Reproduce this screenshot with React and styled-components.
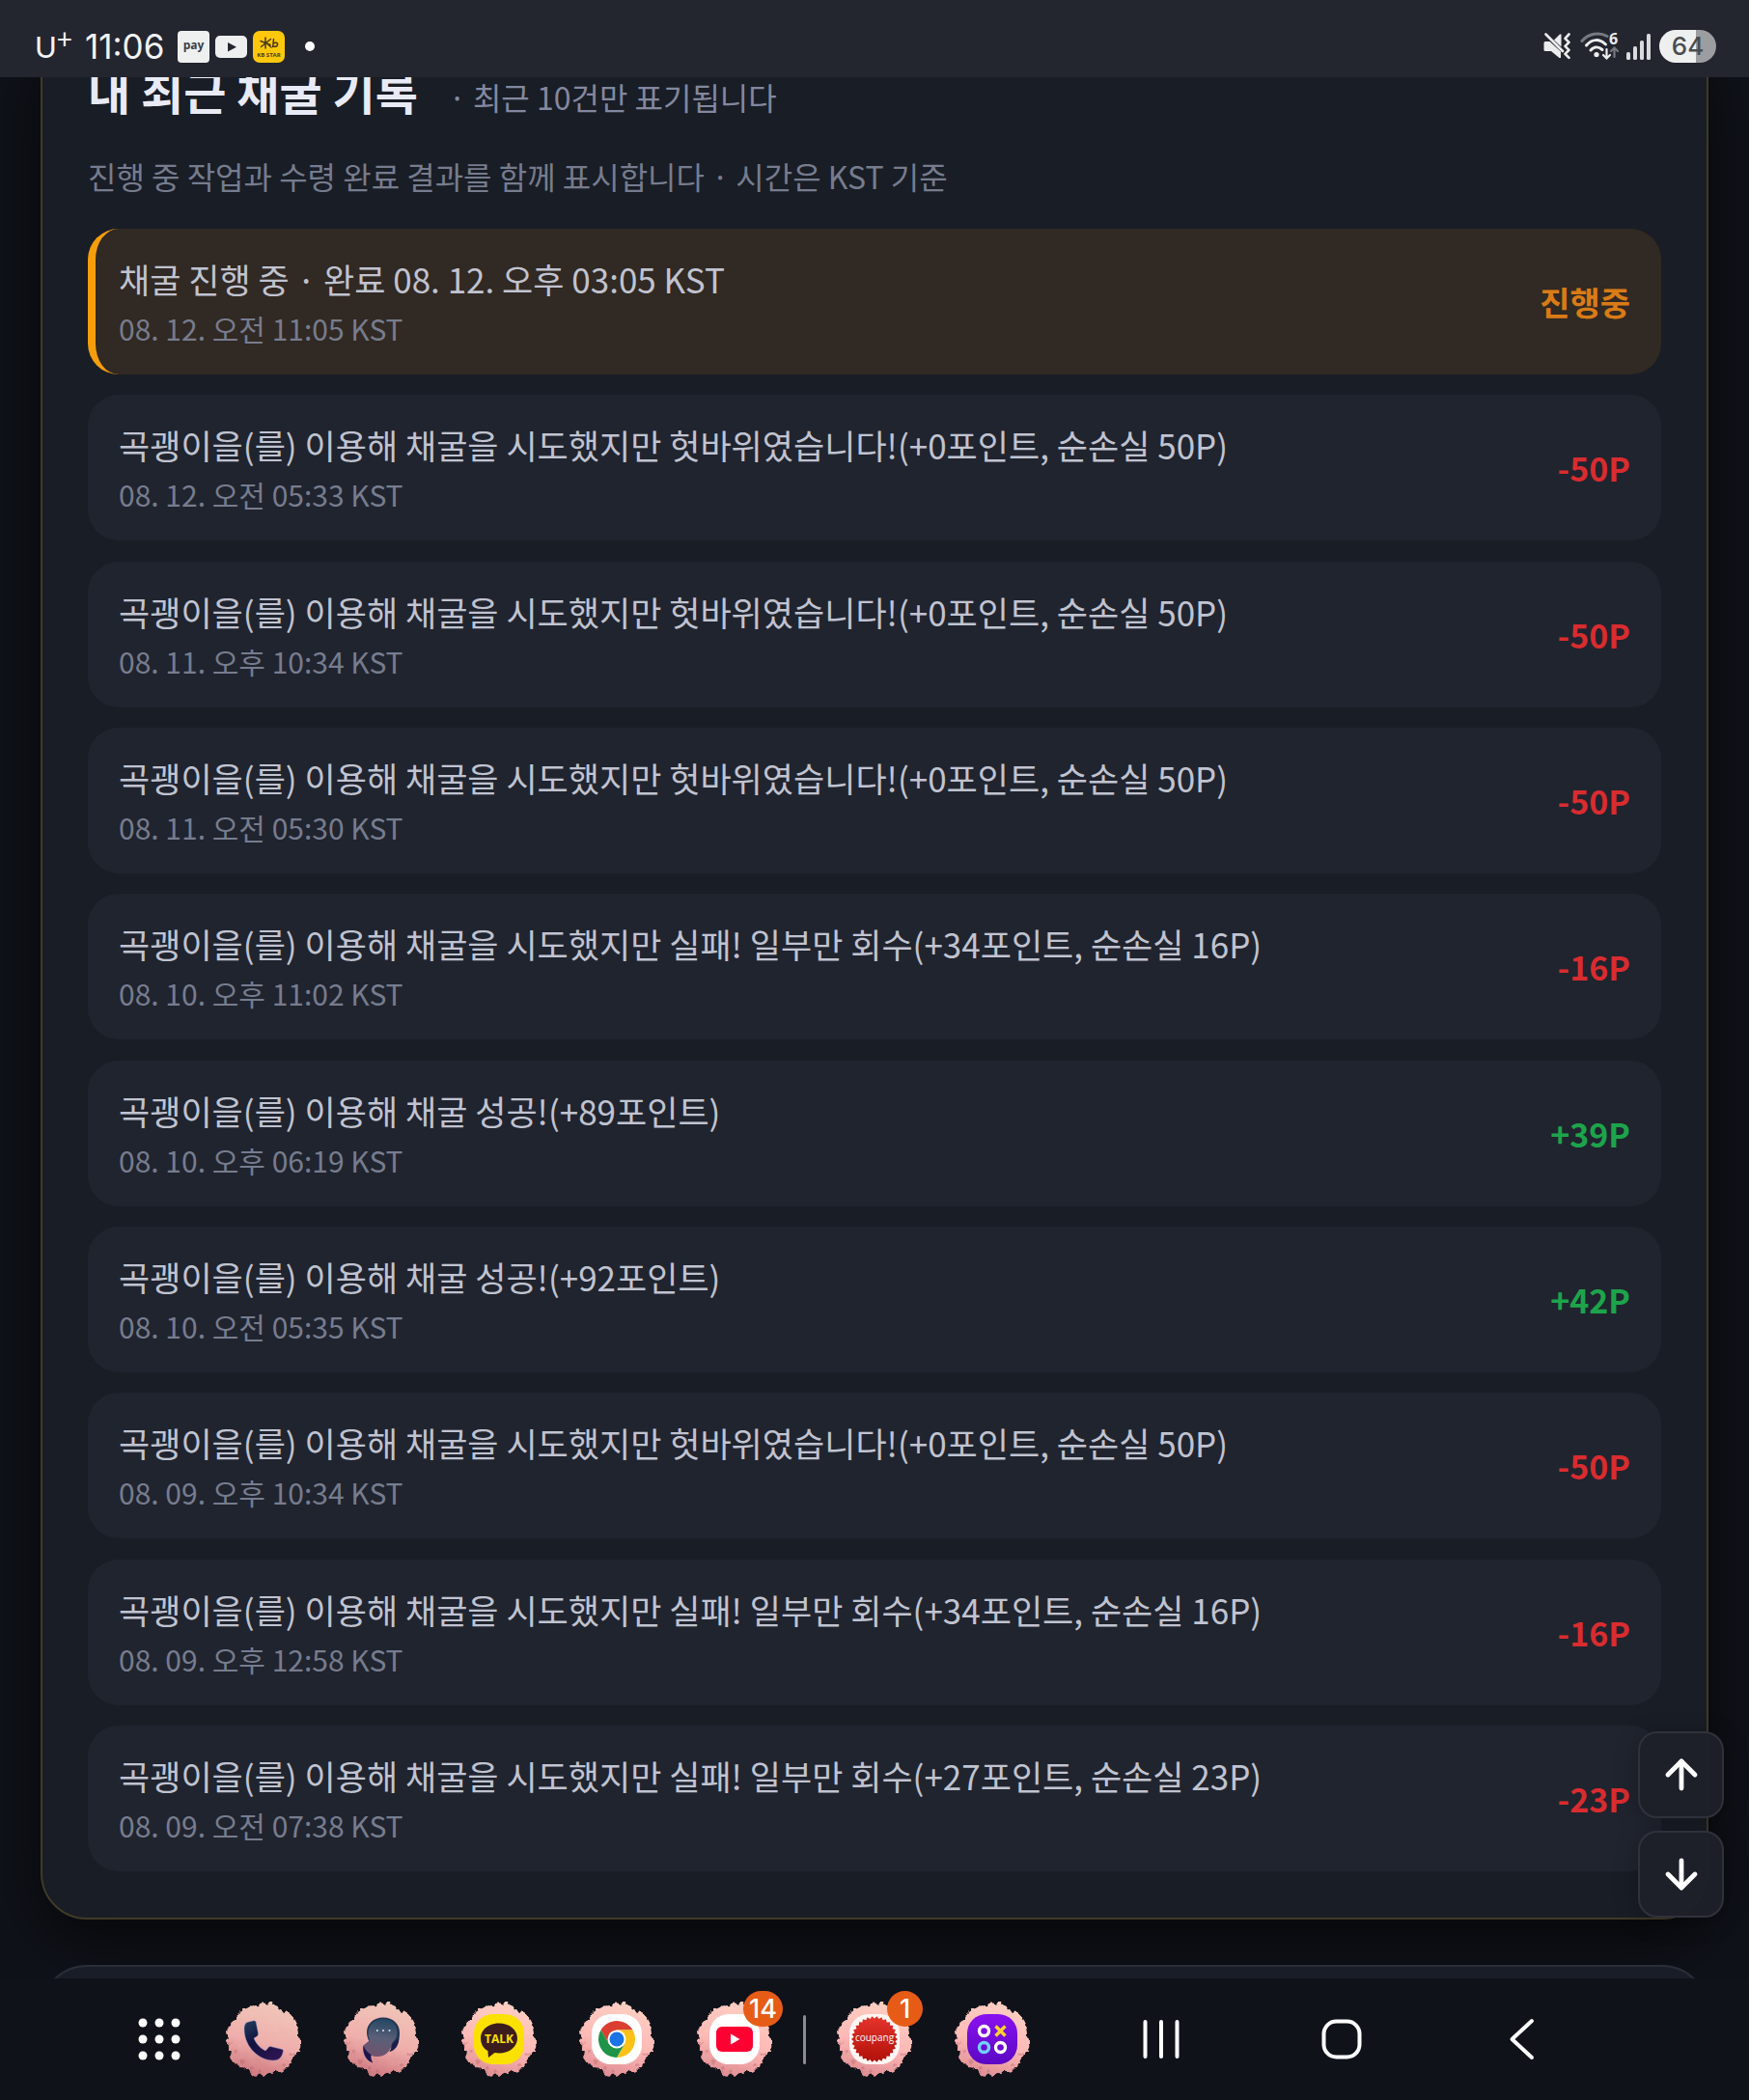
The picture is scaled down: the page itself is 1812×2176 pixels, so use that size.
import React, { useId } from "react";
import styled, { createGlobalStyle } from "styled-components";
import { ArrowDown, ArrowUp } from "lucide-react";

const GlobalStyle = createGlobalStyle`
  * { box-sizing: border-box; }
  body {
    margin: 0;
    background: #0f1219;
    color: #c0c3d0;
    font-family: "Noto Sans CJK KR", "Noto Sans", sans-serif;
  }
  button { font: inherit; color: inherit; }
`;

const Screen = styled.div`
  display: flex;
  flex-direction: column;
  min-height: 100vh;
`;

/* ---------- status bar ---------- */

const StatusBar = styled.header`
  position: relative;
  z-index: 2;
  display: flex;
  justify-content: space-between;
  align-items: center;
  height: 80px;
  padding: 16px 34px 0 36px;
  background: #23262f;
  color: #f2f3f5;
`;

const StatusGroup = styled.div`
  display: flex;
  align-items: center;
  gap: ${(p) => p.$gap}px;
`;

const Carrier = styled.span`
  display: flex;
  width: 40px;
  font: 400 31px/36px Lato, sans-serif;
`;

const CarrierPlus = styled.span`
  font: 400 28px/20px Lato, sans-serif;
`;

const Clock = styled.time`
  width: 84px;
  margin: 0 6px;
  font: 400 35px/36px Inter, sans-serif;
`;

const Battery = styled.span`
  width: 59px;
  height: 34px;
  border-radius: 17px;
  background: linear-gradient(90deg, #eef0f0 64%, #9c9da1 64%);
  color: #4a4c50;
  font: 500 26px/34px Inter, sans-serif;
  text-align: center;
`;

const MoreDot = styled.span`
  width: 10px;
  height: 10px;
  margin-left: 15px;
  border-radius: 50%;
  background: #fff;
`;

/* ---------- page ---------- */

const Content = styled.main`
  flex: 1;
  display: flex;
  flex-direction: column;
  gap: 47px;
  padding: 0 42px;
  overflow: hidden;
`;

const Card = styled.section`
  flex: 1;
  display: flex;
  flex-direction: column;
  margin-top: -49px;
  padding: 32px 47px 48px;
  border: 2px solid #423a28;
  border-radius: 48px;
  background: #191d25;
  box-shadow: 0 22px 64px rgba(0, 0, 0, 0.6);
`;

const NextCard = styled.section`
  height: 96px;
  margin-bottom: -82px;
  border: 2px solid #2b2e38;
  border-radius: 48px;
  background: #191d27;
`;

const CardHeader = styled.div`
  display: flex;
  align-items: baseline;
  gap: 32px;
`;

const Heading = styled.h2`
  margin: 0;
  color: #e8eaf6;
  font-size: 48px;
  line-height: 56px;
  font-weight: 700;
`;

const HeadingNote = styled.span`
  color: #8388a0;
  font-size: 32px;
  line-height: 48px;
`;

const Description = styled.p`
  margin: 34px 0 31px;
  color: #767c8e;
  font-size: 32px;
  line-height: 48px;
`;

const List = styled.ul`
  flex: 1;
  display: flex;
  flex-direction: column;
  justify-content: space-between;
  gap: 21px;
  margin: 0;
  padding: 0;
  list-style: none;
`;

const Entry = styled.li`
  display: flex;
  justify-content: space-between;
  align-items: center;
  padding: 24px 32px;
  border-radius: 32px;
  background: ${(p) => (p.$active ? "#312923" : "#20242f")};
  ${(p) => p.$active && "border-left: 8px solid #f59e0b; padding-left: 24px;"}
`;

const EntryTitle = styled.p`
  margin: 0;
  color: #c0c3d0;
  font-size: 35px;
  line-height: 56px;
`;

const EntryDate = styled.time`
  display: block;
  color: #777c8e;
  font-size: 30px;
  line-height: 47px;
`;

const amountColors = { active: "#d97b16", loss: "#d92c2f", gain: "#1da44b" };

const Amount = styled.strong`
  color: ${(p) => amountColors[p.$kind]};
  font-size: 34px;
  line-height: 51px;
  font-weight: 700;
`;

const ScrollControls = styled.div`
  position: fixed;
  right: 26px;
  bottom: 189px;
  z-index: 3;
  display: flex;
  flex-direction: column;
  gap: 13px;
`;

const ScrollButton = styled.button`
  display: grid;
  place-items: center;
  width: 89px;
  height: 90px;
  padding: 0;
  border: 2px solid #30323b;
  border-radius: 20px;
  background: rgba(29, 32, 41, 0.96);
  color: #fff;
  box-shadow: 0 4px 24px rgba(0, 0, 0, 0.25);
`;

/* ---------- system bar ---------- */

const TaskBar = styled.nav`
  position: relative;
  z-index: 2;
  display: flex;
  align-items: center;
  height: 126px;
  padding-left: 143px;
  background: #0f1219;
`;

const AppGroup = styled.div`
  display: flex;
  gap: 44px;
`;

const IconButton = styled.button`
  position: relative;
  display: grid;
  place-items: center;
  width: ${(p) => p.$width}px;
  height: 78px;
  padding: 0;
  border: 0;
  background: none;
  color: #fff;
`;

const AppsSlot = styled.div`
  margin-right: 47px;
`;

const Divider = styled.span`
  width: 3px;
  height: 51px;
  margin: 0 32px;
  border-radius: 2px;
  background: #8b8c90;
`;

const SystemKeys = styled.div`
  display: flex;
  gap: 127px;
  margin-left: 106px;
`;

const Badge = styled.span`
  position: absolute;
  top: -11px;
  right: -11px;
  min-width: 37px;
  height: 37px;
  padding: 0 6px;
  border-radius: 19px;
  background: #e65c17;
  color: #fff;
  font: 500 27px/37px Inter, sans-serif;
  text-align: center;
`;

/* ---------- icons ---------- */

const PayIcon = () => (
  <svg width="33" height="33" viewBox="0 0 33 33">
    <rect width="33" height="33" rx="4" fill="#eef0f0" />
    <text x="16.5" y="19" textAnchor="middle" fontFamily="Open Sans, sans-serif" fontWeight="700" fontSize="12" fill="#3c3e45">pay</text>
  </svg>
);

const VideoIcon = () => (
  <svg width="33" height="23" viewBox="0 0 33 23">
    <rect width="33" height="23" rx="5" fill="#eef0f0" />
    <path d="M13 7l9 4.700l-9 4.700z" fill="#23262f" />
  </svg>
);

const BankIcon = () => (
  <svg width="33" height="33" viewBox="0 0 33 33">
    <rect width="33" height="33" rx="7" fill="#fdc80b" />
    <g stroke="#4b3a12" strokeWidth="1.500" fill="none" strokeLinecap="round">
      <path d="M13 7v11M8 10.500l10 4M18.500 8.500L8.500 16.500M14 12.500l5 4.500" />
      <path d="M21.500 8.500l-.8 8M21 13.500c2-2 5-1.500 4.500 1s-4 2-4.800 1" />
    </g>
    <text x="16.500" y="27" textAnchor="middle" fontFamily="Open Sans, sans-serif" fontWeight="700" fontSize="6" fill="#4b3a12">KB STAR</text>
  </svg>
);

const MuteIcon = () => (
  <svg width="30" height="28" viewBox="0 0 30 28" fill="none">
    <path d="M2 9h4.500L18 19.500V26h-1.500L8 19H2q-1.500 0-1.500-1.500v-7Q.5 9 2 9z" fill="#eceded" />
    <path d="M11 7.500L17 1.500h1.500v13z" fill="#eceded" />
    <path d="M2.500 1.500L20 19" stroke="#eceded" strokeWidth="2.600" strokeLinecap="round" />
    <path d="M26.500 1.500l-4 4.300 4 4-4 4 4 4-4 4 4 4" stroke="#eceded" strokeWidth="2.600" strokeLinecap="round" strokeLinejoin="round" />
  </svg>
);

const WifiIcon = () => (
  <svg width="40" height="30" viewBox="0 0 40 30" fill="none" strokeLinecap="round">
    <path d="M2 9.500C9 1.500 20 0 28 4.500" stroke="#777980" strokeWidth="3" />
    <path d="M6.500 14c6-7 13.500-7 20-1" stroke="#eceded" strokeWidth="3" />
    <path d="M11 19c3.500-4 8-4 12-.5" stroke="#eceded" strokeWidth="3" />
    <circle cx="17" cy="23.500" r="2.600" fill="#eceded" />
    <path d="M27.500 18v9M24 24l3.500 3.500L31 24" stroke="#eceded" strokeWidth="2.200" />
    <path d="M35.500 26v-9M32 20l3.500-3.500L39 20" stroke="#777980" strokeWidth="2.200" />
    <text x="30" y="12.500" fontFamily="Open Sans, sans-serif" fontWeight="700" fontSize="16" fill="#eceded">6</text>
  </svg>
);

const SignalIcon = () => (
  <svg width="26" height="28" viewBox="0 0 26 28" fill="#d9dadc">
    <rect x="0" y="20" width="4" height="8" rx="1.500" />
    <rect x="7" y="14" width="4" height="14" rx="1.500" />
    <rect x="14" y="8" width="4" height="20" rx="1.500" />
    <rect x="21" y="1" width="4" height="27" rx="1.500" />
  </svg>
);

const tufts = Array.from({ length: 56 }, (_, i) => {
  const angle = (i / 56) * Math.PI * 2;
  const reach = 31.5 + Math.sin(i * 0.9) * 1.3 + Math.cos(i * 2.7) * 0.9;
  return {
    x: 39 + Math.cos(angle) * reach * 1.04,
    y: 39 + Math.sin(angle) * reach,
    r: 4.2 + Math.abs(Math.sin(i * 1.7)) * 1.2,
  };
});

const FurIcon = ({ muted, children }) => {
  const id = useId();
  const [top, middle, bottom] = muted
    ? ["#f0c5b8", "#efaeab", "#cf7a80"]
    : ["#ffcdc2", "#fdb9b6", "#e08f94"];
  return (
    <svg width="78" height="78" viewBox="0 0 78 78">
      <defs>
        <linearGradient id={id} gradientUnits="userSpaceOnUse" x1="48" y1="4" x2="30" y2="76">
          <stop offset="0" stopColor={top} />
          <stop offset="0.55" stopColor={middle} />
          <stop offset="1" stopColor={bottom} />
        </linearGradient>
        <filter id={`${id}f`} x="-10%" y="-10%" width="120%" height="120%">
          <feTurbulence type="fractalNoise" baseFrequency="0.16" numOctaves="2" seed="4" result="n" />
          <feDisplacementMap in="SourceGraphic" in2="n" scale="7" xChannelSelector="R" yChannelSelector="G" />
        </filter>
      </defs>
      <g filter={`url(#${id}f)`} fill={`url(#${id})`}>
        <ellipse cx="39" cy="39" rx="34" ry="33" />
        {tufts.map((t, i) => <circle key={i} cx={t.x} cy={t.y} r={t.r} />)}
        <g fill="#a8565f" opacity="0.3">
          <circle cx="9" cy="53" r="2" /><circle cx="17" cy="62" r="2.500" /><circle cx="27" cy="69" r="2" />
          <circle cx="36" cy="72" r="2" /><circle cx="60" cy="65" r="2" /><circle cx="69" cy="54" r="2" />
          <circle cx="4" cy="44" r="2" />
        </g>
      </g>
      {children}
    </svg>
  );
};

const Tile = ({ fill }) => <rect x="13" y="13" width="52" height="52" rx="20" fill={fill} />;

const PhoneArt = () => {
  const id = useId();
  return (
    <FurIcon muted>
      <linearGradient id={id} x1="0" y1="0" x2="0.6" y2="1">
        <stop offset="0" stopColor="#24405f" /><stop offset="0.5" stopColor="#11123f" /><stop offset="1" stopColor="#2c1450" />
      </linearGradient>
      <path fill={`url(#${id})`} stroke="#8fa3c9" strokeOpacity="0.5" strokeWidth="0.8" d="M29 19.700L22 21.500Q19 23 19 28C19 38 23 47 31 54C38 60 46 62 53 60.500Q58 59 59.500 51L58.500 49.500L46 46.500Q44 46.500 43 49L41 51C35 48 31 43 29 38L33 35.500L33.500 33L31 20.500Z" />
    </FurIcon>
  );
};

const MessageArt = () => {
  const id = useId();
  return (
    <FurIcon muted>
      <linearGradient id={id} gradientUnits="userSpaceOnUse" x1="42" y1="16" x2="34" y2="60">
        <stop offset="0" stopColor="#1d4560" /><stop offset="0.5" stopColor="#5b5f78" /><stop offset="1" stopColor="#74506b" />
      </linearGradient>
      <path d="M41 16.500c10 0 17 6.500 17 15.500c0 9-2 18-10.500 20q3-4 1-7H29c-3-4-5-8-5-13c0-9 7-15.500 17-15.500z" fill="#1f3553" />
      <path d="M41 18c9 0 14.500 6 14.500 14q0 6-5 10.500C49.500 51 43 57 35 57q-4 0-6.500-1.500q-1 4 1.700 8C23 61 19 53 20.500 45.500L27 40q-2-4-1.500-8.500C26 24 32 18 41 18z" fill={`url(#${id})`} />
      <path d="M20.500 45.500C19.500 53 23 61 30.200 63.500Q27.500 59 28.500 55Q23 52 20.500 45.500z" fill="#1c1550" />
      <path d="M57 38q0 11-9.500 14q3-4 2-7" fill="#1a1d4c" />
      <g fill="#dce6ef"><circle cx="34.800" cy="30" r="1" /><circle cx="41" cy="30" r="1" /><circle cx="47.500" cy="30" r="1" /></g>
    </FurIcon>
  );
};

const TalkArt = () => (
  <FurIcon>
    <Tile fill="#fae100" />
    <path d="M39 22.500c10.800 0 19 6.800 19 15.500s-8.200 15.500-19 15.500q-2.500 0-4.500-.4L28 58l-.6-7C22.500 48.500 20 43.500 20 38c0-8.700 8.200-15.500 19-15.500z" fill="#3c1d1e" />
    <text x="39" y="42.500" textAnchor="middle" fontFamily="Open Sans, sans-serif" fontWeight="700" fontSize="12" fill="#fae100">TALK</text>
  </FurIcon>
);

const ChromeArt = () => (
  <FurIcon>
    <Tile fill="#fff" />
    <g transform="translate(39 39)">
      <path d="M-16.450 -9.500A19 19 0 0 1 16.450 -9.500L0 -9.500L-8.200 4.800Z" fill="#db3f32" />
      <path d="M16.450 -9.500A19 19 0 0 1 0 19L8.200 4.800L0 -9.500Z" fill="#fbc116" />
      <path d="M0 19A19 19 0 0 1 -16.450 -9.500L-8.200 4.800L8.200 4.800Z" fill="#1e9449" />
      <circle r="9.500" fill="#fff" />
      <circle r="7.500" fill="#1b73e8" />
    </g>
  </FurIcon>
);

const VideoArt = () => (
  <FurIcon>
    <Tile fill="#fff" />
    <rect x="20" y="26" width="38" height="26" rx="6" fill="#ff0033" />
    <path d="M35 33.500l9.500 5.500l-9.500 5.500z" fill="#fff" />
  </FurIcon>
);

const burst = Array.from({ length: 60 }, (_, i) => {
  const r = i % 2 ? 21.5 : 24;
  const a = (i / 60) * Math.PI * 2;
  return `${39 + Math.cos(a) * r},${39 + Math.sin(a) * r}`;
}).join(" ");

const ShopArt = () => {
  const id = useId();
  return (
    <FurIcon>
      <Tile fill="#fff6f4" />
      <linearGradient id={id} x1="0" y1="0" x2="0" y2="1">
        <stop offset="0" stopColor="#e4342c" /><stop offset="1" stopColor="#b01008" />
      </linearGradient>
      <polygon points={burst} fill={`url(#${id})`} />
      <text x="39" y="41" textAnchor="middle" fontFamily="Open Sans, sans-serif" fontWeight="400" fontSize="10" fill="#fff">coupang</text>
    </FurIcon>
  );
};

const GameArt = () => {
  const id = useId();
  return (
    <FurIcon>
      <linearGradient id={id} x1="0" y1="0" x2="0" y2="1">
        <stop offset="0" stopColor="#8a10f0" /><stop offset="1" stopColor="#5b08c4" />
      </linearGradient>
      <Tile fill={`url(#${id})`} />
      <g fill="none" strokeWidth="3.400">
        <circle cx="30.500" cy="30.500" r="5" stroke="#fff" />
        <circle cx="30.500" cy="47.500" r="5" stroke="#6fd0ff" />
        <circle cx="47.500" cy="47.500" r="5" stroke="#fff" />
        <path d="M42.500 25.500l10 10M52.500 25.500l-10 10" stroke="#fcd22c" />
      </g>
    </FurIcon>
  );
};

const AppsIcon = () => (
  <svg width="44" height="44" viewBox="0 0 44 44" fill="#fff">
    {[5, 22, 39].map((y) => [5, 22, 39].map((x) => <circle key={`${x}-${y}`} cx={x} cy={y} r="4.500" />))}
  </svg>
);

const RecentsIcon = () => (
  <svg width="42" height="42" viewBox="0 0 42 42" stroke="#fff" strokeWidth="4" strokeLinecap="round">
    <path d="M4.500 3v36M21 3v36M37.500 3v36" />
  </svg>
);

const HomeIcon = () => (
  <svg width="42" height="42" viewBox="0 0 42 42">
    <rect x="2.500" y="2.500" width="37" height="37" rx="13" fill="none" stroke="#fff" strokeWidth="4" />
  </svg>
);

const BackIcon = () => (
  <svg width="42" height="44" viewBox="0 0 42 44">
    <path d="M31 3L10.500 22L31 41" fill="none" stroke="#fff" strokeWidth="4" strokeLinecap="round" strokeLinejoin="round" />
  </svg>
);

/* ---------- data ---------- */

const miss = "곡괭이을(를) 이용해 채굴을 시도했지만 헛바위였습니다!(+0포인트, 순손실 50P)";
const partial = (got, lost) =>
  `곡괭이을(를) 이용해 채굴을 시도했지만 실패! 일부만 회수(+${got}포인트, 순손실 ${lost}P)`;
const success = (got) => `곡괭이을(를) 이용해 채굴 성공!(+${got}포인트)`;

const entries = [
  { title: "채굴 진행 중 · 완료 08. 12. 오후 03:05 KST", date: "08. 12. 오전 11:05 KST", amount: "진행중", kind: "active" },
  { title: miss, date: "08. 12. 오전 05:33 KST", amount: "-50P", kind: "loss" },
  { title: miss, date: "08. 11. 오후 10:34 KST", amount: "-50P", kind: "loss" },
  { title: miss, date: "08. 11. 오전 05:30 KST", amount: "-50P", kind: "loss" },
  { title: partial(34, 16), date: "08. 10. 오후 11:02 KST", amount: "-16P", kind: "loss" },
  { title: success(89), date: "08. 10. 오후 06:19 KST", amount: "+39P", kind: "gain" },
  { title: success(92), date: "08. 10. 오전 05:35 KST", amount: "+42P", kind: "gain" },
  { title: miss, date: "08. 09. 오후 10:34 KST", amount: "-50P", kind: "loss" },
  { title: partial(34, 16), date: "08. 09. 오후 12:58 KST", amount: "-16P", kind: "loss" },
  { title: partial(27, 23), date: "08. 09. 오전 07:38 KST", amount: "-23P", kind: "loss" },
];

const pinnedApps = [
  { label: "전화", Art: PhoneArt },
  { label: "메시지", Art: MessageArt },
  { label: "카카오톡", Art: TalkArt },
  { label: "Chrome", Art: ChromeArt },
  { label: "YouTube", Art: VideoArt, badge: 14 },
];

const recentApps = [
  { label: "쿠팡", Art: ShopArt, badge: 1 },
  { label: "게임", Art: GameArt },
];

const Apps = ({ items }) => (
  <AppGroup>
    {items.map(({ label, Art, badge }) => (
      <IconButton key={label} $width={78} aria-label={label}>
        <Art />
        {badge && <Badge>{badge}</Badge>}
      </IconButton>
    ))}
  </AppGroup>
);

export default function App() {
  return (
    <Screen>
      <GlobalStyle />
      <StatusBar>
        <StatusGroup $gap={6}>
          <Carrier>U<CarrierPlus>+</CarrierPlus></Carrier>
          <Clock>11:06</Clock>
          <PayIcon />
          <VideoIcon />
          <BankIcon />
          <MoreDot />
        </StatusGroup>
        <StatusGroup $gap={8}>
          <MuteIcon />
          <WifiIcon />
          <SignalIcon />
          <Battery>64</Battery>
        </StatusGroup>
      </StatusBar>

      <Content>
        <Card>
          <CardHeader>
            <Heading>내 최근 채굴 기록</Heading>
            <HeadingNote>· 최근 10건만 표기됩니다</HeadingNote>
          </CardHeader>
          <Description>진행 중 작업과 수령 완료 결과를 함께 표시합니다 · 시간은 KST 기준</Description>
          <List>
            {entries.map((entry) => (
              <Entry key={entry.date} $active={entry.kind === "active"}>
                <div>
                  <EntryTitle>{entry.title}</EntryTitle>
                  <EntryDate>{entry.date}</EntryDate>
                </div>
                <Amount $kind={entry.kind}>{entry.amount}</Amount>
              </Entry>
            ))}
          </List>
        </Card>
        <NextCard />
      </Content>

      <ScrollControls>
        <ScrollButton aria-label="맨 위로"><ArrowUp size={48} strokeWidth={2.4} /></ScrollButton>
        <ScrollButton aria-label="맨 아래로"><ArrowDown size={48} strokeWidth={2.4} /></ScrollButton>
      </ScrollControls>

      <TaskBar>
        <AppsSlot>
          <IconButton $width={44} aria-label="모든 앱"><AppsIcon /></IconButton>
        </AppsSlot>
        <Apps items={pinnedApps} />
        <Divider />
        <Apps items={recentApps} />
        <SystemKeys>
          <IconButton $width={60} aria-label="최근 앱"><RecentsIcon /></IconButton>
          <IconButton $width={60} aria-label="홈"><HomeIcon /></IconButton>
          <IconButton $width={60} aria-label="뒤로"><BackIcon /></IconButton>
        </SystemKeys>
      </TaskBar>
    </Screen>
  );
}
